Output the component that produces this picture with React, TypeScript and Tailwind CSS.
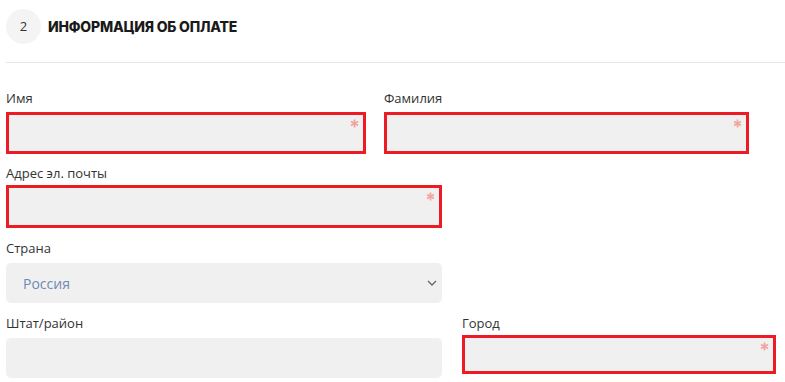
import React from 'react';

const Asterisk = () => (
  <svg width="9" height="9" viewBox="0 0 9 9" className="absolute right-[4px] top-[4px]">
    <g stroke="#f3a39c" strokeWidth="1.7" strokeLinecap="butt">
      <line x1="4.5" y1="0.5" x2="4.5" y2="8.5" />
      <line x1="1" y1="2.5" x2="8" y2="6.5" />
      <line x1="1" y1="6.5" x2="8" y2="2.5" />
    </g>
  </svg>
);

const Label = ({ children, className = '' }: { children: React.ReactNode; className?: string }) => (
  <div className={`text-[13px] leading-[16px] text-[#333] ${className}`}>{children}</div>
);

const RequiredInput = ({ className }: { className: string }) => (
  <div className={`relative border-[3px] border-[#ed1c24] bg-[#f0f0f0] ${className}`}>
    <Asterisk />
  </div>
);

export default function App() {
  return (
    <div className="w-[785px] h-[382px] overflow-hidden bg-white pl-[6px] font-['Open_Sans','Liberation_Sans',sans-serif]">
      {/* section header */}
      <div className="flex items-center gap-[7px] pt-[9px]">
        <div className="w-[35px] h-[35px] rounded-full bg-[#f4f4f4] flex items-center justify-center text-[13px] text-[#333]">
          2
        </div>
        <h2 className="font-['Inter',sans-serif] font-extrabold text-[14px] tracking-[-0.2px] text-[#1a1a1a]">
          ИНФОРМАЦИЯ ОБ ОПЛАТЕ
        </h2>
      </div>
      <div className="mt-[18px] h-px bg-[#e6e6e6]" />

      {/* name row */}
      <div className="flex gap-[18px] mt-[27px]">
        <div>
          <Label className="mb-[6px]">Имя</Label>
          <RequiredInput className="w-[360px] h-[42px]" />
        </div>
        <div>
          <Label className="mb-[6px]">Фамилия</Label>
          <RequiredInput className="w-[365px] h-[42px]" />
        </div>
      </div>

      <div className="mt-[11px]">
        <Label className="mb-[4px]">Адрес эл. почты</Label>
        <RequiredInput className="w-[436px] h-[43px]" />
      </div>

      <div className="mt-[12px]">
        <Label className="mb-[7px]">Страна</Label>
        <div className="w-[436px] h-[40px] rounded-[5px] bg-[#f0f0f0] flex items-center justify-between pl-[17px] pr-[5px]">
          <span className="text-[14px] text-[#7189b3]">Россия</span>
          <svg width="10" height="6" viewBox="0 0 10 6">
            <path d="M1 1l4 4 4-4" fill="none" stroke="#666" strokeWidth="1.3" />
          </svg>
        </div>
      </div>

      <div className="flex gap-[20px] mt-[12px]">
        <div>
          <Label className="mb-[7px]">Штат/район</Label>
          <div className="w-[436px] h-[40px] rounded-[5px] bg-[#f0f0f0]" />
        </div>
        <div>
          <Label className="mb-[4px]">Город</Label>
          <RequiredInput className="w-[314px] h-[39px]" />
        </div>
      </div>
    </div>
  );
}
